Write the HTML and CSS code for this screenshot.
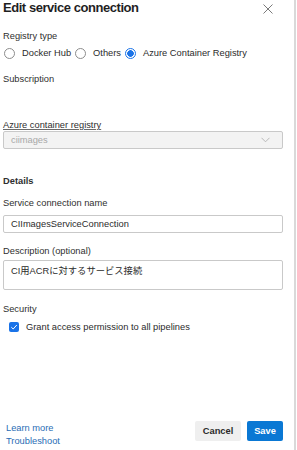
FILE: index.html
```html
<!DOCTYPE html>
<html>
<head>
<meta charset="utf-8">
<link rel="stylesheet" href="styles.css">
</head>
<body>
<div class="panel">
  <div class="head">
    <h1 class="title">Edit service connection</h1>
    <svg class="close" width="10" height="10" viewBox="0 0 10 10"><path d="M0.5 0.5L9.5 9.5M9.5 0.5L0.5 9.5" stroke="#7a7a7a" stroke-width="1"/></svg>
  </div>

  <div class="label l-regtype">Registry type</div>
  <div class="radios">
    <span class="radio"></span><span class="rtext">Docker Hub</span>
    <span class="radio"></span><span class="rtext">Others</span>
    <span class="radio on"></span><span class="rtext">Azure Container Registry</span>
  </div>

  <div class="label l-sub">Subscription</div>

  <div class="label l-acr"><span class="ul">Azure container registry</span></div>
  <div class="select">
    <span class="ph">ciimages</span>
    <svg width="9" height="6" viewBox="0 0 9 6"><path d="M0.5 0.8L4.5 4.8L8.5 0.8" fill="none" stroke="#b8b8b8" stroke-width="1"/></svg>
  </div>

  <div class="label bold l-details">Details</div>
  <div class="label l-name">Service connection name</div>
  <div class="input">CIImagesServiceConnection</div>

  <div class="label l-desc">Description (optional)</div>
  <div class="input textarea">CI用ACRに対するサービス接続</div>

  <div class="label l-sec">Security</div>
  <div class="check-row">
    <span class="check"><svg width="8" height="8" viewBox="0 0 8 8"><path d="M1.3 4.2L3.2 6L6.8 2" fill="none" stroke="#fff" stroke-width="1"/></svg></span>
    <span class="ctext">Grant access permission to all pipelines</span>
  </div>

  <div class="footer">
    <div class="links">
      <a class="link">Learn more</a>
      <a class="link">Troubleshoot</a>
    </div>
    <div class="buttons">
      <span class="btn cancel">Cancel</span>
      <span class="btn save">Save</span>
    </div>
  </div>
</div>
</body>
</html>
```

FILE: styles.css
```css
html, body {
  margin: 0;
  padding: 0;
  background: #fff;
}
body {
  font-family: "Liberation Sans", Arial, "Noto Sans CJK JP", sans-serif;
  color: #2b2b2b;
  font-size: 9.3px;
}
.panel {
  width: 296px;
  height: 450px;
  box-sizing: border-box;
  border-right: 2px solid #d9d9d9;
  padding-left: 3px;
  display: flex;
  flex-direction: column;
}
.head {
  display: flex;
  align-items: center;
  justify-content: space-between;
  width: 280px;
  height: 16px;
}
.title {
  margin: 0;
  font-size: 13px;
  font-weight: bold;
  letter-spacing: -0.45px;
  line-height: 16px;
  color: #1f1f1f;
}
.close {
  margin-right: 10px;
  margin-top: 2px;
}
.label {
  line-height: 12px;
  color: #2f2f2f;
}
.bold { font-weight: bold; }
.l-regtype { margin-top: 14px; }
.radios {
  margin-top: 4px;
  height: 14px;
  display: flex;
  align-items: center;
}
.radio {
  width: 9px;
  height: 9px;
  border: 1px solid #8c8c8c;
  border-radius: 50%;
  box-sizing: content-box;
  margin-right: 7px;
  flex: none;
}
.radio:first-child { margin-left: 1px; }
.radio.on {
  border-color: #1a73e8;
  background: radial-gradient(circle, #1a73e8 0 3px, #fff 3.6px);
}
.rtext { margin-right: 4px; }
.l-sub { margin-top: 13px; }
.l-acr {
  margin-top: 35px;
  line-height: 11px;
}
.ul {
  text-decoration: underline;
  text-decoration-color: #6a6a6a;
  text-underline-offset: 1px;
}
.select {
  width: 280px;
  height: 18px;
  box-sizing: border-box;
  border: 1px solid #c9c9c9;
  border-radius: 2px;
  background: #f3f3f3;
  display: flex;
  align-items: center;
  justify-content: space-between;
  padding: 0 12px 0 7px;
}
.ph { color: #a8a8a8; }
.l-details { margin-top: 26px; }
.l-name { margin-top: 10px; }
.input {
  margin-top: 6px;
  width: 280px;
  height: 18px;
  box-sizing: border-box;
  border: 1px solid #c9c9c9;
  border-radius: 2px;
  padding: 0 7px;
  line-height: 16px;
  color: #2b2b2b;
}
.l-desc { margin-top: 12px; }
.textarea {
  margin-top: 3px;
  height: 30px;
  padding-top: 2px;
}
.l-sec { margin-top: 13px; }
.check-row {
  margin-top: 6px;
  height: 12px;
  display: flex;
  align-items: center;
}
.check {
  width: 10px;
  height: 10px;
  margin-left: 6px;
  margin-right: 7px;
  border-radius: 2px;
  background: #1a73e8;
  display: flex;
  align-items: center;
  justify-content: center;
}
.footer {
  margin-top: auto;
  margin-bottom: 3px;
  width: 280px;
  display: flex;
  justify-content: space-between;
  align-items: flex-end;
}
.links {
  display: flex;
  flex-direction: column;
  padding-left: 3px;
}
.link {
  color: #2a6db5;
  line-height: 12.5px;
}
.buttons {
  display: flex;
  gap: 6px;
  margin-bottom: 6px;
}
.btn {
  height: 20px;
  line-height: 20px;
  font-weight: bold;
  text-align: center;
  border-radius: 2px;
}
.cancel {
  width: 46px;
  background: #efefef;
  color: #2b2b2b;
}
.save {
  width: 36px;
  background: #0a78d4;
  color: #fff;
}
```
